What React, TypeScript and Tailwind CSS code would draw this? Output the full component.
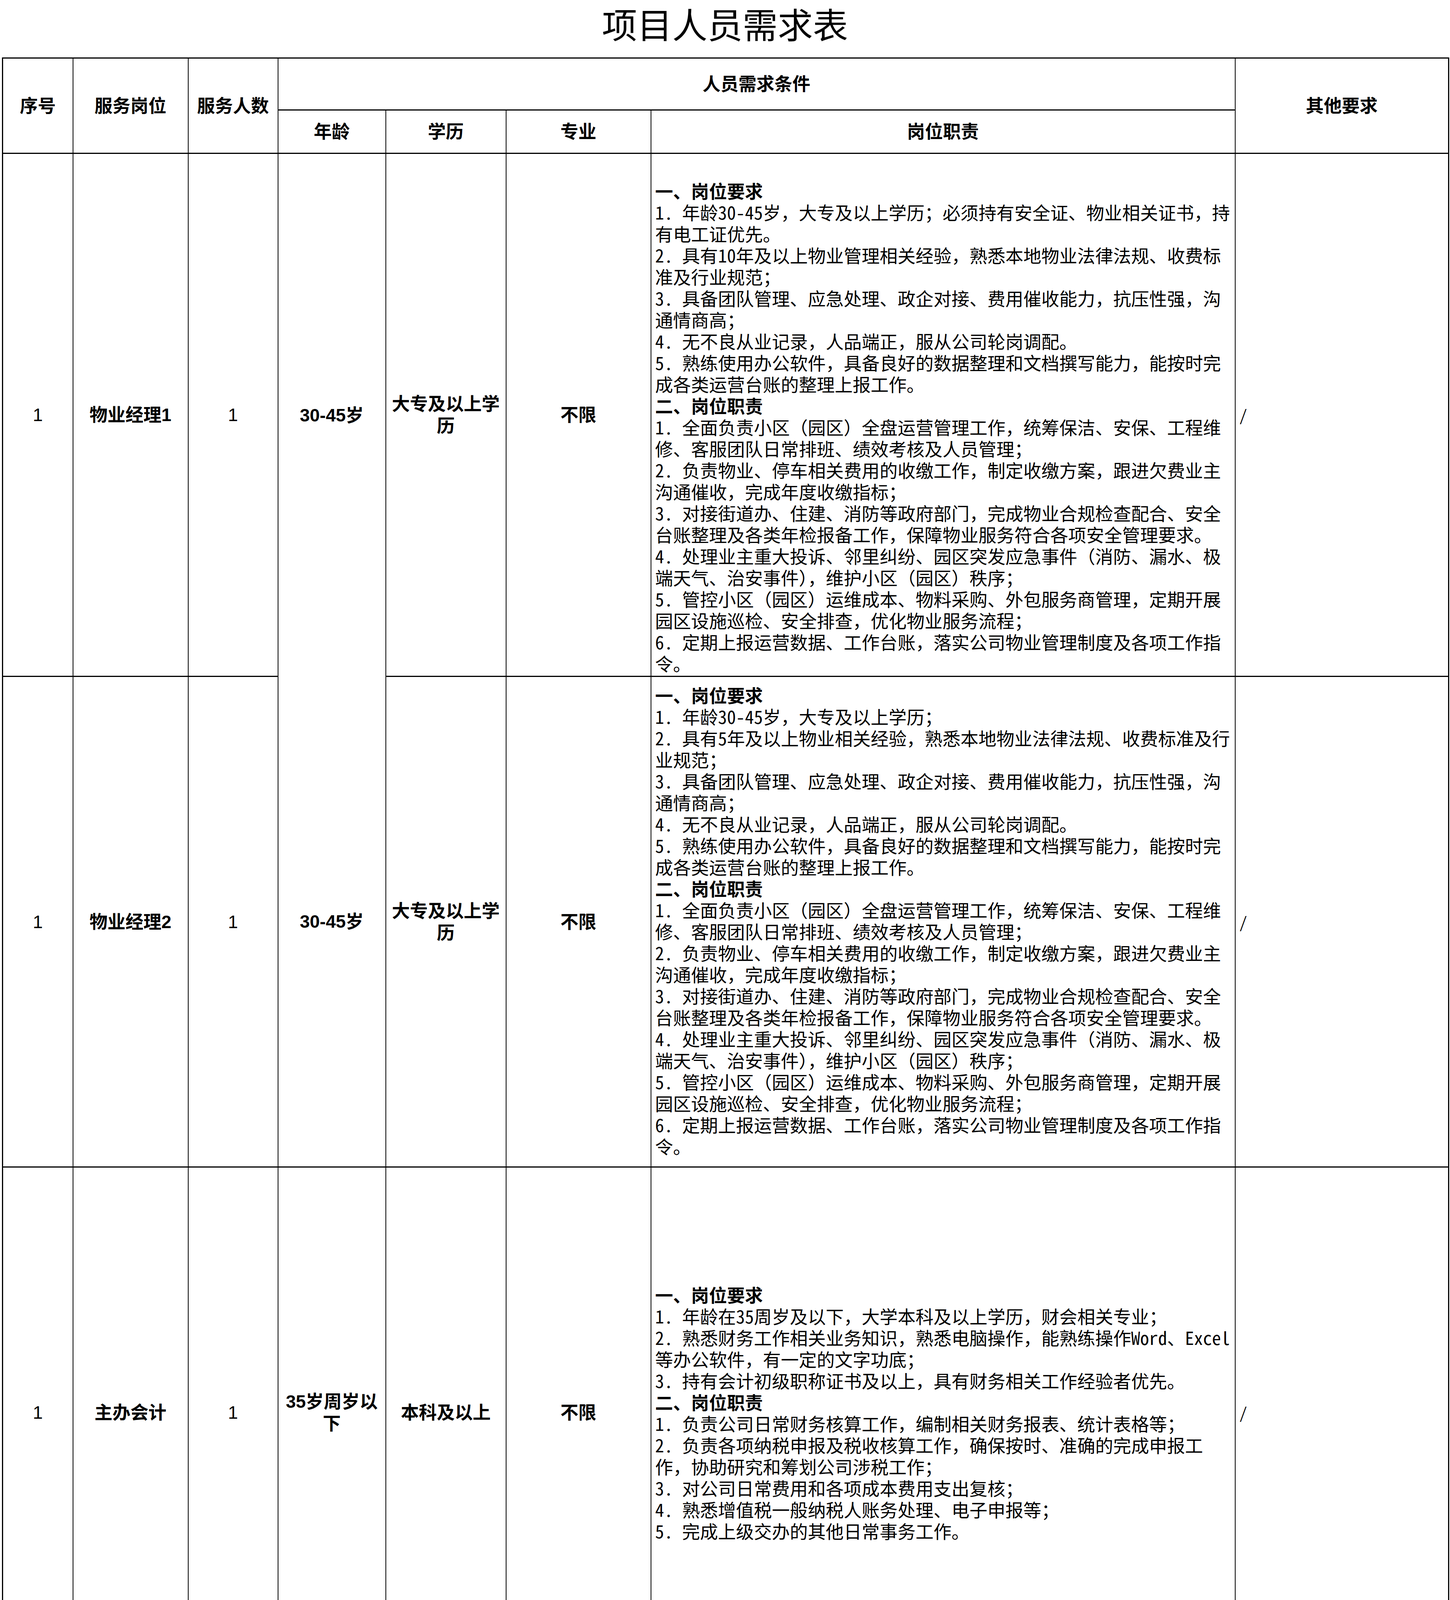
const reqA = [
  { b: true, t: '一、岗位要求' },
  { t: '1. 年龄30-45岁，大专及以上学历；必须持有安全证、物业相关证书，持' },
  { t: '有电工证优先。' },
  { t: '2. 具有10年及以上物业管理相关经验，熟悉本地物业法律法规、收费标' },
  { t: '准及行业规范；' },
  { t: '3. 具备团队管理、应急处理、政企对接、费用催收能力，抗压性强，沟' },
  { t: '通情商高；' },
  { t: '4. 无不良从业记录，人品端正，服从公司轮岗调配。' },
  { t: '5. 熟练使用办公软件，具备良好的数据整理和文档撰写能力，能按时完' },
  { t: '成各类运营台账的整理上报工作。' },
];

const reqB = [
  { b: true, t: '一、岗位要求' },
  { t: '1. 年龄30-45岁，大专及以上学历；' },
  { t: '2. 具有5年及以上物业相关经验，熟悉本地物业法律法规、收费标准及行' },
  { t: '业规范；' },
  { t: '3. 具备团队管理、应急处理、政企对接、费用催收能力，抗压性强，沟' },
  { t: '通情商高；' },
  { t: '4. 无不良从业记录，人品端正，服从公司轮岗调配。' },
  { t: '5. 熟练使用办公软件，具备良好的数据整理和文档撰写能力，能按时完' },
  { t: '成各类运营台账的整理上报工作。' },
];

const dutyManager = [
  { b: true, t: '二、岗位职责' },
  { t: '1. 全面负责小区（园区）全盘运营管理工作，统筹保洁、安保、工程维' },
  { t: '修、客服团队日常排班、绩效考核及人员管理；' },
  { t: '2. 负责物业、停车相关费用的收缴工作，制定收缴方案，跟进欠费业主' },
  { t: '沟通催收，完成年度收缴指标；' },
  { t: '3. 对接街道办、住建、消防等政府部门，完成物业合规检查配合、安全' },
  { t: '台账整理及各类年检报备工作，保障物业服务符合各项安全管理要求。' },
  { t: '4. 处理业主重大投诉、邻里纠纷、园区突发应急事件（消防、漏水、极' },
  { t: '端天气、治安事件），维护小区（园区）秩序；' },
  { t: '5. 管控小区（园区）运维成本、物料采购、外包服务商管理，定期开展' },
  { t: '园区设施巡检、安全排查，优化物业服务流程；' },
  { t: '6. 定期上报运营数据、工作台账，落实公司物业管理制度及各项工作指' },
  { t: '令。' },
];

const accountant = [
  { b: true, t: '一、岗位要求' },
  { t: '1. 年龄在35周岁及以下，大学本科及以上学历，财会相关专业；' },
  { t: '2. 熟悉财务工作相关业务知识，熟悉电脑操作，能熟练操作Word、Excel' },
  { t: '等办公软件，有一定的文字功底；' },
  { t: '3. 持有会计初级职称证书及以上，具有财务相关工作经验者优先。' },
  { b: true, t: '二、岗位职责' },
  { t: '1. 负责公司日常财务核算工作，编制相关财务报表、统计表格等；' },
  { t: '2. 负责各项纳税申报及税收核算工作，确保按时、准确的完成申报工' },
  { t: '作，协助研究和筹划公司涉税工作；' },
  { t: '3. 对公司日常费用和各项成本费用支出复核；' },
  { t: '4. 熟悉增值税一般纳税人账务处理、电子申报等；' },
  { t: '5. 完成上级交办的其他日常事务工作。' },
];

type Line = { b?: boolean; t: string };

function Duties({ lines }: { lines: Line[] }) {
  return (
    <div className="px-[10px] text-[46px] leading-[55px] text-black font-[family-name:'Noto_Sans_Mono_CJK_SC','Noto_Sans_CJK_SC',sans-serif]">
      {lines.map((l, i) => (
        <div key={i} className={l.b ? 'h-[55px] whitespace-nowrap font-bold' : 'h-[55px] whitespace-nowrap'}>
          {l.t}
        </div>
      ))}
    </div>
  );
}

const th = 'border-2 border-black text-center align-middle font-bold text-[46px] leading-[56px]';
const td = 'border-2 border-black text-center align-middle font-bold text-[46px] leading-[56px] px-[8px]';

export default function App() {
  const rows = [
    {
      post: '物业经理1',
      age: '30-45岁',
      edu: ['大专及以上学', '历'],
      lines: [...reqA, ...dutyManager],
      h: 'h-[1339px]',
      pad: 'pt-[60px]',
    },
    {
      post: '物业经理2',
      age: '30-45岁',
      edu: ['大专及以上学', '历'],
      lines: [...reqB, ...dutyManager],
      h: 'h-[1256px]',
      pad: 'pb-[8px]',
    },
    {
      post: '主办会计',
      age: ['35岁周岁以', '下'],
      edu: ['本科及以上'],
      lines: accountant,
      h: 'h-[1256px]',
      pad: '',
    },
  ];

  return (
    <div className="w-[3713px] h-[4248px] bg-white text-black font-[family-name:'Liberation_Sans','Noto_Sans_CJK_SC',sans-serif]">
      <div className="h-[147px] text-center text-[90px] leading-[118px] font-[family-name:'Noto_Sans_CJK_SC',sans-serif]">
        项目人员需求表
      </div>
      <table className="ml-[5px] w-[3703px] table-fixed border-collapse border-[3px] border-black">
        <colgroup>
          <col className="w-[180px]" />
          <col className="w-[295px]" />
          <col className="w-[230px]" />
          <col className="w-[276px]" />
          <col className="w-[308px]" />
          <col className="w-[371px]" />
          <col className="w-[1496px]" />
          <col className="w-[547px]" />
        </colgroup>
        <thead>
          <tr className="h-[133px]">
            <th rowSpan={2} className={th + ' border-b-[3px]'}>序号</th>
            <th rowSpan={2} className={th + ' border-b-[3px]'}>服务岗位</th>
            <th rowSpan={2} className={th + ' border-b-[3px]'}>服务人数</th>
            <th colSpan={4} className={th + ' border-b-[3px]'}>人员需求条件</th>
            <th rowSpan={2} className={th + ' border-b-[3px]'}>其他要求</th>
          </tr>
          <tr className="h-[111px]">
            <th className={th + ' border-b-[3px]'}>年龄</th>
            <th className={th + ' border-b-[3px]'}>学历</th>
            <th className={th + ' border-b-[3px]'}>专业</th>
            <th className={th + ' border-b-[3px]'}>岗位职责</th>
          </tr>
        </thead>
        <tbody>
          {rows.map((r, i) => (
            <tr key={i} className={r.h}>
              <td className={td + ' border-b-[3px] font-normal'}>1</td>
              <td className={td + ' border-b-[3px]'}>{r.post}</td>
              <td className={td + ' border-b-[3px] font-normal'}>1</td>
              <td
                className={
                  td +
                  (i === 0 ? ' [border-bottom-style:hidden]' : ' border-b-[3px]')
                }
              >
                {Array.isArray(r.age)
                  ? r.age.map((a, k) => <div key={k}>{a}</div>)
                  : r.age}
              </td>
              <td className={td + ' border-b-[3px]'}>
                {r.edu.map((e, k) => (
                  <div key={k}>{e}</div>
                ))}
              </td>
              <td className={td + ' border-b-[3px]'}>不限</td>
              <td className={'border-2 border-b-[3px] border-black align-middle p-0 ' + r.pad}>
                <Duties lines={r.lines} />
              </td>
              <td className="border-2 border-b-[3px] border-black align-middle text-left pl-[10px] text-[40px] font-[family-name:'Noto_Sans_Mono_CJK_SC','Noto_Sans_CJK_SC',sans-serif] font-light">
                /
              </td>
            </tr>
          ))}
        </tbody>
      </table>
    </div>
  );
}
